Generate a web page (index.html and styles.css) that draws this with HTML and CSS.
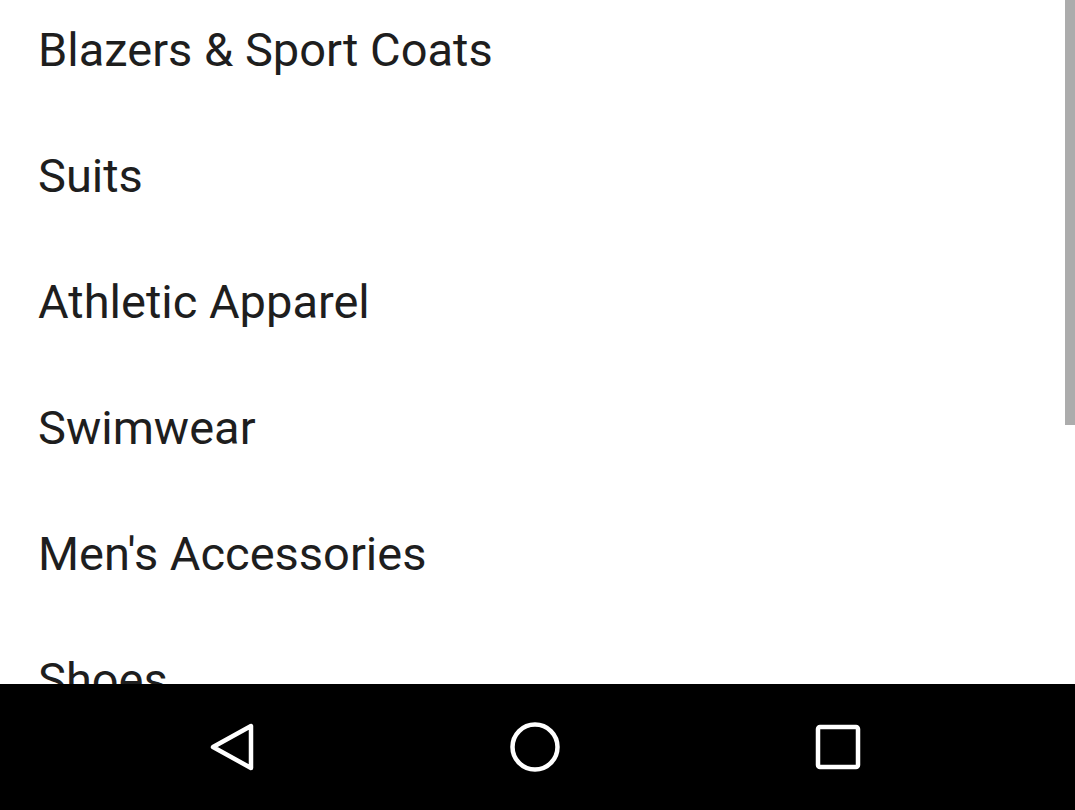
FILE: index.html
```html
<!DOCTYPE html>
<html>
<head>
<meta charset="utf-8">
<link rel="stylesheet" href="styles.css">
</head>
<body>
<div class="screen">
  <div class="content">
    <ul class="list">
      <li class="item">Blazers &amp; Sport Coats</li>
      <li class="item">Suits</li>
      <li class="item">Athletic Apparel</li>
      <li class="item">Swimwear</li>
      <li class="item">Men's Accessories</li>
      <li class="item">Shoes</li>
    </ul>
    <div class="scrollbar"></div>
  </div>
  <nav class="navbar">
    <svg class="nav-icon" width="60" height="60" viewBox="0 0 60 60">
      <path d="M49 9 L49 51 L11 30 Z" fill="none" stroke="#fff" stroke-width="4.5" stroke-linejoin="round"/>
    </svg>
    <svg class="nav-icon" width="60" height="60" viewBox="0 0 60 60">
      <circle cx="30" cy="30" r="22.5" fill="none" stroke="#fff" stroke-width="4.5"/>
    </svg>
    <svg class="nav-icon" width="60" height="60" viewBox="0 0 60 60">
      <rect x="10" y="10" width="40" height="40" rx="2" fill="none" stroke="#fff" stroke-width="4.5"/>
    </svg>
  </nav>
</div>
</body>
</html>
```
FILE: styles.css
```css
html, body {
  margin: 0;
  padding: 0;
  background: #fff;
}
.screen {
  width: 1075px;
  height: 810px;
  display: flex;
  flex-direction: column;
  overflow: hidden;
}
.content {
  position: relative;
  flex: 1;
  overflow: hidden;
  background: #fff;
}
.list {
  list-style: none;
  margin: -13px 0 0 0;
  padding: 0;
}
.item {
  height: 126px;
  line-height: 126px;
  padding-left: 38px;
  font-family: Roboto, "Noto Sans", sans-serif;
  font-size: 47px;
  color: #1e1e1e;
  white-space: nowrap;
}
.scrollbar {
  position: absolute;
  top: 0;
  right: 0;
  width: 10px;
  height: 425px;
  background: #acacac;
}
.navbar {
  height: 126px;
  flex: none;
  background: #000;
  display: flex;
  align-items: center;
  justify-content: space-between;
  padding: 0 207px 0 202px;
}
.nav-icon {
  display: block;
}
```
